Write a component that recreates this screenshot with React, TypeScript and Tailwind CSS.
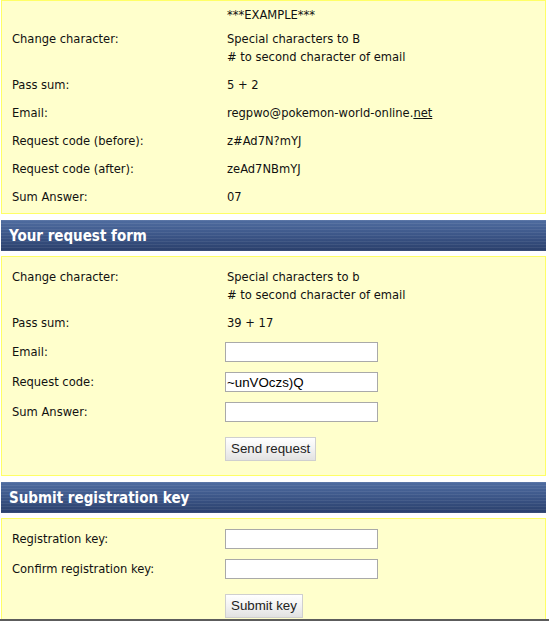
import React from "react";

const body = "font-['DejaVu_Sans_Condensed','DejaVu_Sans',sans-serif] text-[12.8px] leading-[18px] text-[#111]";

function TextRow({ label, children }: { label: string; children: React.ReactNode }) {
  return (
    <>
      <div className="py-[5px] pl-[10px]">{label}</div>
      <div className="py-[5px] pl-[2px]">{children}</div>
    </>
  );
}

function InputRow({ label, value = "" }: { label: string; value?: string }) {
  return (
    <>
      <div className="flex h-[30px] items-center pl-[10px]">{label}</div>
      <div className="flex h-[30px] items-center">
        <input
          defaultValue={value}
          className="h-[20px] w-[153px] border border-[#a9a9a9] bg-white px-[1px] font-['Liberation_Sans',Arial,sans-serif] text-[13.33px] text-black outline-none"
        />
      </div>
    </>
  );
}

function ButtonRow({ label }: { label: string }) {
  return (
    <>
      <div />
      <div className="pt-[10px] pb-[5px]">
        <button className="h-[24px] border border-[#cfcfcf] bg-[linear-gradient(to_bottom,#ffffff,#f2f2f2_50%,#e2e2e2)] px-[5px] font-['Liberation_Sans',Arial,sans-serif] text-[13.33px] text-[#222]">
          {label}
        </button>
      </div>
    </>
  );
}

function Header({ title }: { title: string }) {
  return (
    <div className="ml-[1px] mt-[6px] flex h-[31px] w-[545px] items-center bg-[repeating-linear-gradient(to_bottom,rgba(255,255,255,0.07)_0px,rgba(255,255,255,0.07)_1px,transparent_1px,transparent_3px),linear-gradient(to_bottom,#4f6ca0,#3b5587_50%,#2a3f6b)] pl-[8px] pt-[1px] font-['DejaVu_Sans_Condensed','DejaVu_Sans',sans-serif] text-[15px] font-bold text-white">
      {title}
    </div>
  );
}

function Box({ className = "", children }: { className?: string; children: React.ReactNode }) {
  return (
    <div className={`ml-[1px] w-[545px] border border-[#ffff66] bg-[#ffffcc] ${className}`}>
      <div className={`grid grid-cols-[223px_1fr] ${body}`}>{children}</div>
    </div>
  );
}

export default function App() {
  return (
    <div className="min-h-screen w-[549px] bg-white">
      <Box className="pb-[2px]">
        <div />
        <div className="pt-[5px] pb-[1px] pl-[2px]">***EXAMPLE***</div>
        <TextRow label="Change character:">
          Special characters to B
          <br /># to second character of email
        </TextRow>
        <TextRow label="Pass sum:">5 + 2</TextRow>
        <TextRow label="Email:">
          regpwo@pokemon-world-online.<span className="underline">net</span>
        </TextRow>
        <TextRow label="Request code (before):">z#Ad7N?mYJ</TextRow>
        <TextRow label="Request code (after):">zeAd7NBmYJ</TextRow>
        <TextRow label="Sum Answer:">07</TextRow>
      </Box>

      <Header title="Your request form" />
      <Box className="mt-[5px] pt-[6px] pb-[9px]">
        <TextRow label="Change character:">
          Special characters to b
          <br /># to second character of email
        </TextRow>
        <TextRow label="Pass sum:">39 + 17</TextRow>
        <InputRow label="Email:" />
        <InputRow label="Request code:" value="~unVOczs)Q" />
        <InputRow label="Sum Answer:" />
        <ButtonRow label="Send request" />
      </Box>

      <Header title="Submit registration key" />
      <Box className="mt-[5px] pt-[5px] pb-[9px]">
        <InputRow label="Registration key:" />
        <InputRow label="Confirm registration key:" />
        <ButtonRow label="Submit key" />
      </Box>

      <div className="fixed bottom-0 left-0 h-[2px] w-full bg-[#5c5c5c]" />
    </div>
  );
}
